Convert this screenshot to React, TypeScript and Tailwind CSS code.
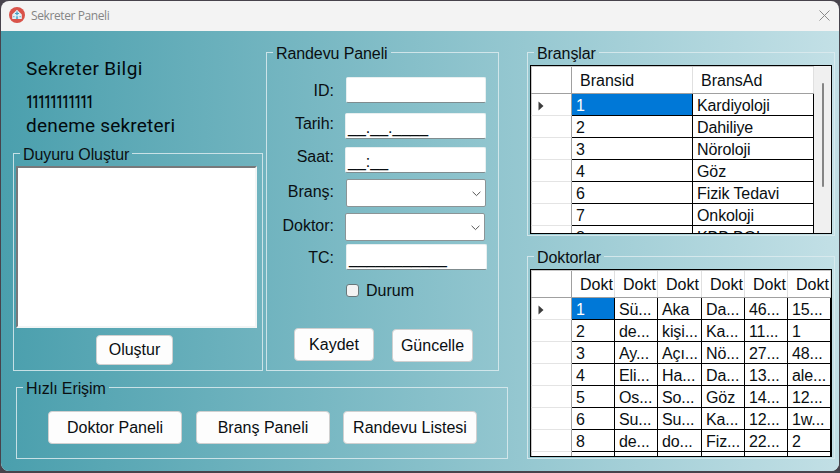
import React from "react";
import type { ReactNode } from "react";

function Group({ title, className, children }: { title: string; className: string; children: ReactNode }) {
  return (
    <fieldset className={`min-w-0 shrink-0 border border-[#dcebee]/85 ${className}`}>
      <legend className="ml-[6px] h-[19px] px-[3px] leading-[21px] tracking-[-0.1px] whitespace-nowrap">{title}</legend>
      {children}
    </fieldset>
  );
}

function Button({ className, children }: { className: string; children: ReactNode }) {
  return (
    <button
      className={`flex shrink-0 items-center justify-center rounded-[4px] border border-[#d0d0d0] bg-[#fdfdfd] whitespace-nowrap ${className}`}
    >
      {children}
    </button>
  );
}

function Field({
  label,
  className,
  labelClass,
  children,
}: {
  label: string;
  className: string;
  labelClass: string;
  children: ReactNode;
}) {
  return (
    <div className={`flex items-center ${className}`}>
      <span className={`w-[67px] shrink-0 text-right leading-[19px] ${labelClass}`}>{label}</span>
      {children}
    </div>
  );
}

function TextBox({ className, text }: { className: string; text: string }) {
  return (
    <div
      className={`h-[26px] rounded-[2px] border border-[#e8eff0] border-b-[#7f8c8f] bg-white pl-[2px] pt-[4px] leading-[19px] ${className}`}
    >
      {text}
    </div>
  );
}

function Combo({ className }: { className: string }) {
  return (
    <div
      className={`flex h-[28px] w-[140px] items-center justify-end rounded-[2px] border border-[#8b9496] bg-white pr-[4px] ${className}`}
    >
      <svg className="mt-[2px]" width="9" height="6" viewBox="0 0 9 6" fill="none" stroke="#555" strokeWidth="1">
        <path d="M0.6 0.8 4.5 4.6 8.4 0.8" />
      </svg>
    </div>
  );
}

function RowHead({ active }: { active: boolean }) {
  return (
    <div className="flex w-[41px] shrink-0 items-center border-r border-b border-r-[#a0a0a0] border-b-[#e4e4e4] border-l border-l-[#c8c8c8] bg-white pl-[6px]">
      {active && (
        <svg className="mt-[2px]" width="6" height="10" viewBox="0 0 6 10" fill="#3c3c3c">
          <path d="M0.5 0.5 5.5 5 0.5 9.5Z" />
        </svg>
      )}
    </div>
  );
}

function DataGrid({
  heads,
  widths,
  rows,
  className,
  scroll,
}: {
  heads: string[];
  widths: string[];
  rows: string[][];
  className: string;
  scroll?: boolean;
}) {
  return (
    <div className={`ml-[2px] flex w-[302px] overflow-hidden border border-black bg-white ${className}`}>
      <div className="flex shrink-0 flex-col">
        <div className="flex h-[28px] shrink-0 border-t border-b border-t-[#c8c8c8] border-b-[#a0a0a0]">
          <div className="w-[41px] shrink-0 border-r border-l border-r-[#a0a0a0] border-l-[#c8c8c8]" />
          {heads.map((h, i) => (
            <div
              key={i}
              className={`shrink-0 overflow-hidden border-r border-[#e0e0e0] pl-[8px] leading-[27px] whitespace-nowrap ${widths[i]}`}
            >
              {h}
            </div>
          ))}
        </div>
        {rows.map((r, i) => (
          <div key={i} className="flex h-[22px] shrink-0">
            <RowHead active={i === 0} />
            {r.map((c, j) => (
              <div
                key={j}
                className={`shrink-0 overflow-hidden border-r border-b border-black pl-[4px] leading-[24px] tracking-[-0.1px] whitespace-nowrap ${widths[j]} ${
                  i === 0 && j === 0 ? "bg-[#0078d7] text-white" : "bg-white"
                }`}
              >
                {c}
              </div>
            ))}
          </div>
        ))}
      </div>
      {scroll && (
        <div className="w-[17px] shrink-0 bg-[#f0f0f0] pt-[17px] pl-[8px]">
          <div className="h-[104px] w-[2px] rounded-full bg-[#858585]" />
        </div>
      )}
    </div>
  );
}

const branches = [
  ["1", "Kardiyoloji"],
  ["2", "Dahiliye"],
  ["3", "Nöroloji"],
  ["4", "Göz"],
  ["6", "Fizik Tedavi"],
  ["7", "Onkoloji"],
  ["8", "KBB BOL"],
];

const doctors = [
  ["1", "Sü...", "Aka", "Da...", "46...", "15..."],
  ["2", "de...", "kişi...", "Ka...", "11...", "1"],
  ["3", "Ay...", "Açı...", "Nö...", "27...", "48..."],
  ["4", "Eli...", "Ha...", "Da...", "13...", "ale..."],
  ["5", "Os...", "So...", "Göz", "14...", "12..."],
  ["6", "Su...", "Su...", "Ka...", "12...", "1w..."],
  ["8", "de...", "do...", "Fiz...", "22...", "2"],
  ["", "", "", "", "", ""],
];

export default function App() {
  return (
    <div className="h-[473px] w-[840px] overflow-hidden bg-[#47434c] pt-px pr-px pb-[2px] pl-px font-['Liberation_Sans',Arial,sans-serif] text-[16px] text-[#0a0f12]">
      <div className="flex h-[470px] w-[838px] flex-col overflow-hidden rounded-[8px] bg-[#f3f3f3]">
        <header className="flex h-[30px] shrink-0 items-center pl-[8px] pr-[9px]">
          <svg className="-mt-[2px]" width="16" height="16" viewBox="0 0 16 16">
            <circle cx="8" cy="8" r="8" fill="#d9534a" />
            <path d="M3.2 7.5 8 2.8 12.8 7.5V12H3.2Z" fill="#e4f1f7" />
            <path d="M7.3 4.6h1.4v1.3H10v1.2H8.7v1.2H7.3V7.1H6V5.9h1.3Z" fill="#4a9fc4" />
            <path d="M6.9 9.2h2.2V12H6.9ZM4.2 8.9h1.3v1.4H4.2ZM10.5 8.9h1.3v1.4h-1.3Z" fill="#67b5d3" />
          </svg>
          <span className="ml-[6px] font-['Open_Sans','Noto_Sans',sans-serif] text-[12px] leading-[16px] tracking-[-0.4px] text-[#858585]">
            Sekreter Paneli
          </span>
          <svg className="-mt-[2px] ml-auto" width="11" height="11" viewBox="0 0 11 11" stroke="#8a8a8a" strokeWidth="1">
            <path d="M0.5 0.5 10.5 10.5M10.5 0.5 0.5 10.5" />
          </svg>
        </header>

        <main className="flex h-[440px] bg-[linear-gradient(89deg,#4a9fad_0%,#c3e0e6_100%)] pl-[12px]">
          <div className="w-[514px] shrink-0 pt-[12px]">
            <div className="flex h-[328px] gap-[3px]">
              <div className="w-[250px] shrink-0">
                <div className="h-[101px] pl-[13px] pt-[13px] font-[Roboto,sans-serif] text-[19px] whitespace-nowrap text-[#020a0e]">
                  <div className="h-[33px] leading-[26px] tracking-[0.4px]">Sekreter Bilgi</div>
                  <div className="h-[24px] origin-left scale-x-70 font-medium leading-[26px] tracking-[-2.2px]">11111111111</div>
                  <div className="h-[26px] leading-[26px] tracking-[0.2px]">deneme sekreteri</div>
                </div>
                <Group title="Duyuru Oluştur" className="h-[227px] w-[250px]">
                  <div className="mt-[3px] ml-[2px] h-[162px] w-[241px] border-t-2 border-r-2 border-b-2 border-l-2 border-t-[#77797b] border-r-[#f2f5f5] border-b-[#f2f5f5] border-l-[#77797b] bg-white" />
                  <Button className="mt-[7px] ml-[82px] h-[30px] w-[77px]">Oluştur</Button>
                </Group>
              </div>

              <Group title="Randevu Paneli" className="h-[328px] w-[233px]">
                <Field label="ID:" className="mt-[15px]" labelClass="">
                  <TextBox className="ml-[12px] w-[140px]" text="" />
                </Field>
                <Field label="Tarih:" className="mt-[10px]" labelClass="pb-[6px]">
                  <TextBox className="ml-[11px] w-[141px]" text="__.__.____" />
                </Field>
                <Field label="Saat:" className="mt-[8px]" labelClass="pb-[7px]">
                  <TextBox className="ml-[11px] w-[141px]" text="__:__" />
                </Field>
                <Field label="Branş:" className="mt-[6px]" labelClass="pb-[4px]">
                  <Combo className="ml-[12px]" />
                </Field>
                <Field label="Doktor:" className="mt-[6px]" labelClass="pb-[4px]">
                  <Combo className="ml-[11px]" />
                </Field>
                <Field label="TC:" className="mt-[3px]" labelClass="">
                  <TextBox className="ml-[12px] w-[141px]" text="___________" />
                </Field>
                <div className="mt-[10px] ml-[79px] flex h-[21px] items-center">
                  <div className="h-[13px] w-[13px] rounded-[3px] border border-[#68777a] bg-[#f3f3f3]" />
                  <span className="ml-[7px] leading-[19px]">Durum</span>
                </div>
                <div className="mt-[27px] ml-[27px] flex gap-[18px]">
                  <Button className="h-[33px] w-[80px]">Kaydet</Button>
                  <Button className="mt-px h-[33px] w-[81px]">Güncelle</Button>
                </div>
              </Group>
            </div>

            <Group title="Hızlı Erişim" className="mt-[7px] ml-[3px] h-[81px] w-[492px]">
              <div className="mt-[14px] ml-[31px] flex">
                <Button className="h-[33px] w-[134px]">Doktor Paneli</Button>
                <Button className="ml-[14px] h-[33px] w-[134px]">Branş Paneli</Button>
                <Button className="ml-[13px] h-[33px] w-[134px]">Randevu Listesi</Button>
              </div>
            </Group>
          </div>

          <div className="pt-[12px]">
            <Group title="Branşlar" className="h-[193px] w-[308px]">
              <DataGrid
                className="mt-[3px] h-[169px]"
                heads={["Bransid", "BransAd"]}
                widths={["w-[121px]", "w-[121px]"]}
                rows={branches}
                scroll
              />
            </Group>
            <Group title="Doktorlar" className="mt-[11px] h-[212px] w-[308px]">
              <DataGrid
                className="mt-[3px] h-[188px]"
                heads={["Dokt", "Dokt", "Dokt", "Dokt", "Dokt", "Dokt"]}
                widths={["w-[43px]", "w-[43px]", "w-[44px]", "w-[43px]", "w-[43px]", "w-[43px]"]}
                rows={doctors}
              />
            </Group>
          </div>
        </main>
      </div>
    </div>
  );
}
